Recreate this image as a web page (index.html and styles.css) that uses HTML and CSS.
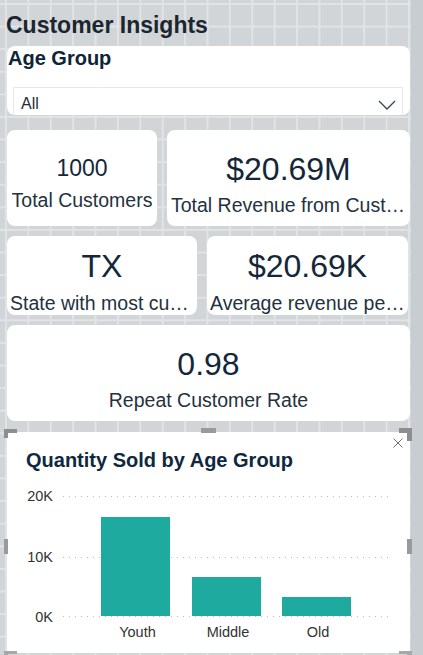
FILE: index.html
```html
<!DOCTYPE html>
<html lang="en">
<head>
<meta charset="utf-8">
<title>Customer Insights</title>
<link rel="stylesheet" href="styles.css">
</head>
<body>
<div class="screen">
  <main class="canvas">
    <h1 class="page-title">Customer Insights</h1>

    <section class="card slicer">
      <h2 class="slicer-title">Age Group</h2>
      <div class="dropdown">
        <span class="dropdown-value">All</span>
        <svg class="chevron" width="18" height="10" viewBox="0 0 18 10" aria-hidden="true">
          <polyline points="1,1 9,9 17,1" fill="none" stroke="#34465a" stroke-width="1.3"/>
        </svg>
      </div>
    </section>

    <div class="kpi-row row-one">
      <div class="card kpi">
        <div class="kpi-value kpi-value-small">1000</div>
        <div class="kpi-label">Total Customers</div>
      </div>
      <div class="card kpi">
        <div class="kpi-value">$20.69M</div>
        <div class="kpi-label">Total Revenue from Customers</div>
      </div>
    </div>

    <div class="kpi-row row-two">
      <div class="card kpi kpi-short">
        <div class="kpi-value">TX</div>
        <div class="kpi-label">State with most customers</div>
      </div>
      <div class="card kpi kpi-short">
        <div class="kpi-value">$20.69K</div>
        <div class="kpi-label">Average revenue per customer</div>
      </div>
    </div>

    <div class="card kpi kpi-wide">
      <div class="kpi-value">0.98</div>
      <div class="kpi-label">Repeat Customer Rate</div>
    </div>

    <section class="card chart">
      <h2 class="chart-title">Quantity Sold by Age Group</h2>
      <svg class="chart-svg" width="403" height="170" viewBox="0 0 403 170">
        <g class="gridlines" stroke="#bdbdbd" stroke-width="1" stroke-dasharray="1 5">
          <line x1="56" y1="16.5" x2="386" y2="16.5"/>
          <line x1="56" y1="77.5" x2="386" y2="77.5"/>
          <line x1="56" y1="136.5" x2="386" y2="136.5"/>
        </g>
        <g class="y-labels" font-family="'Liberation Sans', Arial, sans-serif" font-size="14.5" fill="#333" text-anchor="end">
          <text x="46" y="21">20K</text>
          <text x="46" y="82">10K</text>
          <text x="46" y="142">0K</text>
        </g>
        <g class="bars" fill="#1faa9f">
          <rect x="94" y="37" width="69" height="99"/>
          <rect x="185" y="97" width="69" height="39"/>
          <rect x="275" y="117" width="69" height="19"/>
        </g>
        <g class="x-labels" font-family="'Liberation Sans', Arial, sans-serif" font-size="14.5" fill="#333" text-anchor="middle">
          <text x="130.5" y="156.5">Youth</text>
          <text x="221" y="156.5">Middle</text>
          <text x="311" y="156.5">Old</text>
        </g>
      </svg>

      <svg class="close-icon" width="10" height="10" viewBox="0 0 10 10" aria-hidden="true">
        <path d="M0.5 0.5 L9.5 9.5 M9.5 0.5 L0.5 9.5" stroke="#707070" stroke-width="1" fill="none"/>
      </svg>
      <span class="handle handle-tl"></span>
      <span class="handle handle-tm"></span>
      <span class="handle handle-tr"></span>
      <span class="handle handle-lm"></span>
      <span class="handle handle-rm"></span>
      <span class="handle handle-bl"></span>
      <span class="handle handle-br"></span>
    </section>
  </main>
  <div class="rail"></div>
</div>
</body>
</html>
```

FILE: styles.css
```css
html, body {
  margin: 0;
  padding: 0;
  height: 100%;
  overflow: hidden;
}

body {
  font-family: "Liberation Sans", Arial, sans-serif;
  background: #d1d5d8;
}

.screen {
  display: flex;
  height: 655px;
  width: 423px;
}

.canvas {
  width: 411px;
  box-sizing: border-box;
  padding: 0 1px 0 7px;
  background-color: #d1d5d8;
  background-image:
    linear-gradient(to right, #e1e4e6 2px, transparent 2px),
    linear-gradient(to bottom, #e1e4e6 2px, transparent 2px);
  background-size: 22.4px 22.6px;
  background-position: 5px 3px;
  display: flex;
  flex-direction: column;
}

.rail {
  flex: 1;
  background: #c8cdd1;
}

.page-title {
  margin: 11px 0 7px -1px;
  font-size: 23px;
  line-height: 28px;
  font-weight: bold;
  color: #1c262e;
}

.card {
  background: #ffffff;
  border-radius: 8px;
  box-sizing: border-box;
}

/* Slicer */
.slicer {
  height: 69px;
  overflow: hidden;
  padding-left: 1px;
}

.slicer-title {
  margin: 0;
  font-size: 20px;
  line-height: 24px;
  font-weight: bold;
  color: #0e2437;
}

.dropdown {
  margin: 17px 7px 0 5px;
  border: 1px solid #e8e8e8;
  padding: 6px 6px 8px 7px;
  display: flex;
  align-items: flex-end;
  justify-content: space-between;
}

.dropdown-value {
  font-size: 16px;
  line-height: 20px;
  color: #1f2b36;
}

.chevron {
  display: block;
  margin-bottom: 4px;
}

/* KPI cards */
.kpi-row {
  display: grid;
  gap: 10px;
}

.row-one {
  margin-top: 15px;
  grid-template-columns: 150px 1fr;
}

.row-two {
  margin-top: 10px;
  grid-template-columns: 190px 201px;
}

.kpi {
  height: 96px;
  padding: 11px 4px 0;
  display: flex;
  flex-direction: column;
  align-items: center;
  justify-content: center;
  overflow: hidden;
  min-width: 0;
}

.kpi-short {
  height: 79px;
  padding-left: 3px;
  padding-right: 3px;
}

.kpi-wide {
  margin-top: 10px;
}

.kpi-value {
  font-size: 32px;
  line-height: 1.2;
  color: #142739;
  white-space: nowrap;
}

.kpi-value-small {
  font-size: 23px;
}

.kpi-label {
  margin-top: 5px;
  font-size: 19.5px;
  line-height: 24px;
  color: #243240;
  white-space: nowrap;
  overflow: hidden;
  text-overflow: ellipsis;
  max-width: 100%;
}

/* Chart */
.chart {
  position: relative;
  margin-top: 11px;
  height: 221px;
  border-radius: 3px;
  padding-top: 16px;
}

.chart-title {
  margin: 0;
  padding-left: 19px;
  font-size: 20px;
  line-height: 24px;
  font-weight: bold;
  color: #0f2841;
}

.chart-svg {
  display: block;
  margin-top: 8px;
}

.close-icon {
  position: absolute;
  left: 386px;
  top: 6px;
}

.handle {
  position: absolute;
  box-sizing: border-box;
  border: 0 solid #8e8e8e;
}

.handle-tl {
  left: -3px;
  top: -3px;
  width: 13px;
  height: 9px;
  border-top-width: 4px;
  border-left-width: 4px;
}

.handle-tm {
  left: 194px;
  top: -4px;
  width: 15px;
  height: 5px;
  background: #9a9a9a;
}

.handle-tr {
  right: -2px;
  top: -4px;
  width: 13px;
  height: 13px;
  border-top-width: 5px;
  border-right-width: 5px;
}

.handle-lm {
  left: -3px;
  top: 107px;
  width: 4px;
  height: 15px;
  background: #9a9a9a;
}

.handle-rm {
  right: -2px;
  top: 107px;
  width: 5px;
  height: 15px;
  background: #9a9a9a;
}

.handle-bl {
  left: -3px;
  top: 219px;
  width: 13px;
  height: 9px;
  border-left-width: 4px;
  border-top-width: 3px;
  border-color: #a8a8a8;
}

.handle-br {
  right: -2px;
  top: 219px;
  width: 13px;
  height: 9px;
  border-right-width: 5px;
  border-top-width: 3px;
  border-color: #a8a8a8;
}
```
